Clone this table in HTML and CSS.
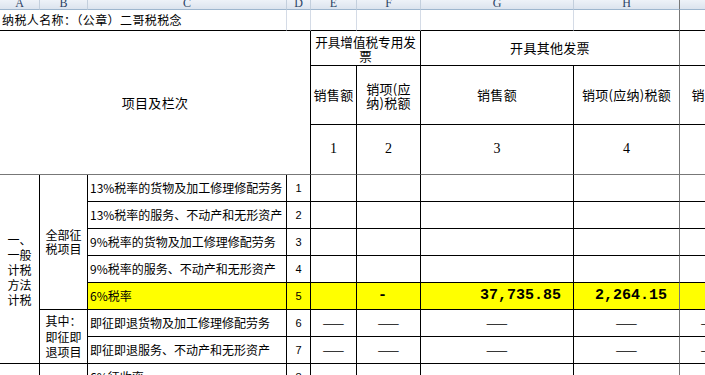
FILE: index.html
```html
<!DOCTYPE html>
<html lang="zh-CN">
<head>
<meta charset="utf-8">
<title>附列资料</title>
<link rel="stylesheet" href="styles.css">
</head>
<body>
<div class="sheet">
  <div class="ch">A</div>
  <div class="ch">B</div>
  <div class="ch">C</div>
  <div class="ch">D</div>
  <div class="ch">E</div>
  <div class="ch">F</div>
  <div class="ch">G</div>
  <div class="ch fr">H</div>
  <div class="ch">I</div>

  <div class="r1 title">纳税人名称：（公章）二哥税税念</div>
  <div class="r1"></div>
  <div class="r1"></div>
  <div class="r1"></div>
  <div class="r1"></div>
  <div class="r1 fr"></div>
  <div class="r1"></div>

  <div class="c hd fb item">项目及栏次</div>
  <div class="c hd vat">开具增值税专用发<br>票</div>
  <div class="c hd fr other">开具其他发票</div>
  <div class="c hd"></div>

  <div class="c hd">销售额</div>
  <div class="c hd two">销项(应<br>纳)税额</div>
  <div class="c hd">销售额</div>
  <div class="c hd fr">销项(应纳)税额</div>
  <div class="c hd">销售额</div>

  <div class="c num fb">1</div>
  <div class="c num fb">2</div>
  <div class="c num fb">3</div>
  <div class="c num fr fb">4</div>
  <div class="c num fb">5</div>

  <div class="c side grp-a">一、<br>一般<br>计税<br>方法<br>计税</div>
  <div class="c side grp-b">全部征<br>税项目</div>
  <div class="c side grp-c">其中：<br>即征即<br>退项目</div>

  <div class="c left">13%税率的货物及加工修理修配劳务</div>
  <div class="c no">1</div>
  <div class="c"></div><div class="c"></div><div class="c"></div><div class="c fr"></div><div class="c"></div>

  <div class="c left">13%税率的服务、不动产和无形资产</div>
  <div class="c no">2</div>
  <div class="c"></div><div class="c"></div><div class="c"></div><div class="c fr"></div><div class="c"></div>

  <div class="c left">9%税率的货物及加工修理修配劳务</div>
  <div class="c no">3</div>
  <div class="c"></div><div class="c"></div><div class="c"></div><div class="c fr"></div><div class="c"></div>

  <div class="c left">9%税率的服务、不动产和无形资产</div>
  <div class="c no">4</div>
  <div class="c"></div><div class="c"></div><div class="c"></div><div class="c fr"></div><div class="c"></div>

  <div class="c left hl">6%税率</div>
  <div class="c no hl">5</div>
  <div class="c hl"></div>
  <div class="c hl val dashval">-</div>
  <div class="c hl val right">37,735.85</div>
  <div class="c hl val right fr">2,264.15</div>
  <div class="c hl"></div>

  <div class="c left">即征即退货物及加工修理修配劳务</div>
  <div class="c no">6</div>
  <div class="c dash">——</div><div class="c dash">——</div><div class="c dash">——</div><div class="c dash fr">——</div><div class="c dash">——</div>

  <div class="c left">即征即退服务、不动产和无形资产</div>
  <div class="c no">7</div>
  <div class="c dash">——</div><div class="c dash">——</div><div class="c dash">——</div><div class="c dash fr">——</div><div class="c dash">——</div>

  <div class="c"></div>
  <div class="c"></div>
  <div class="c left">6%征收率</div>
  <div class="c no">8</div>
  <div class="c"></div><div class="c"></div><div class="c"></div><div class="c fr"></div><div class="c"></div>
</div>
</body>
</html>
```

FILE: styles.css
```css
html, body {
  margin: 0;
  padding: 0;
  background: #fff;
  overflow: hidden;
}

.sheet {
  display: grid;
  grid-template-columns: 40px 48px 199px 24px 46px 64px 153px 106px 64px;
  grid-template-rows: 10px 21px 35px 59px 50px repeat(8, 27px);
  font-family: "Noto Sans CJK SC", sans-serif;
  font-size: 12px;
  color: #000;
}

.sheet > div {
  box-sizing: border-box;
  overflow: hidden;
  white-space: nowrap;
}

/* column letter header */
.ch {
  display: flex;
  align-items: flex-end;
  justify-content: center;
  background: linear-gradient(to bottom, #eef2f8, #dce4ee);
  border-right: 1px solid #c3cfdd;
  border-bottom: 1px solid #9eb6ce;
  font-family: "Liberation Serif", serif;
  font-size: 12px;
  line-height: 12px;
  color: #2b4263;
}

/* first sheet row */
.r1 {
  border-right: 1px solid #d4dbe6;
  border-bottom: 1px solid #000;
}

.title {
  grid-column: 1 / 4;
  grid-row: 2;
  display: flex;
  align-items: center;
  padding-left: 2px;
  line-height: 14px;
  letter-spacing: 0.4px;
}

/* table cells */
.c {
  display: flex;
  align-items: center;
  justify-content: center;
  text-align: center;
  border-right: 1px solid #000;
  border-bottom: 1px solid #000;
  line-height: 14px;
}

.fr { border-right-color: #777; }
.fb { border-bottom-color: #777; }

.hd {
  font-size: 13px;
  line-height: 14px;
  letter-spacing: 0.3px;
}

.two {
  line-height: 13.5px;
  padding-top: 1px;
}

.item {
  grid-column: 1 / 5;
  grid-row: 3 / 6;
}

.vat {
  grid-column: 5 / 7;
  grid-row: 3;
  font-size: 12.6px;
  letter-spacing: 0;
  line-height: 13.5px;
  padding-top: 1px;
}

.other {
  grid-column: 7 / 9;
  grid-row: 3;
}

.num {
  font-family: "Liberation Serif", serif;
  font-size: 14px;
  padding-bottom: 1px;
}

.side {
  line-height: 15px;
}

.grp-a {
  grid-column: 1;
  grid-row: 6 / span 7;
}

.grp-b {
  grid-column: 2;
  grid-row: 6 / span 5;
  line-height: 14.5px;
}

.grp-c {
  grid-column: 2;
  grid-row: 11 / span 2;
  line-height: 15.5px;
}

.left {
  justify-content: flex-start;
  padding-left: 2px;
}

.no {
  font-family: "Liberation Sans", sans-serif;
  font-size: 11px;
}

.hl { background: #ffff00; }

.val {
  font-family: "Liberation Mono", monospace;
  font-weight: bold;
  font-size: 15px;
}

.right {
  justify-content: flex-end;
  padding-right: 12px;
}

.dashval {
  padding-right: 12px;
}

.dash {
  font-size: 13px;
  letter-spacing: 2px;
  padding-left: 2px;
}
```
